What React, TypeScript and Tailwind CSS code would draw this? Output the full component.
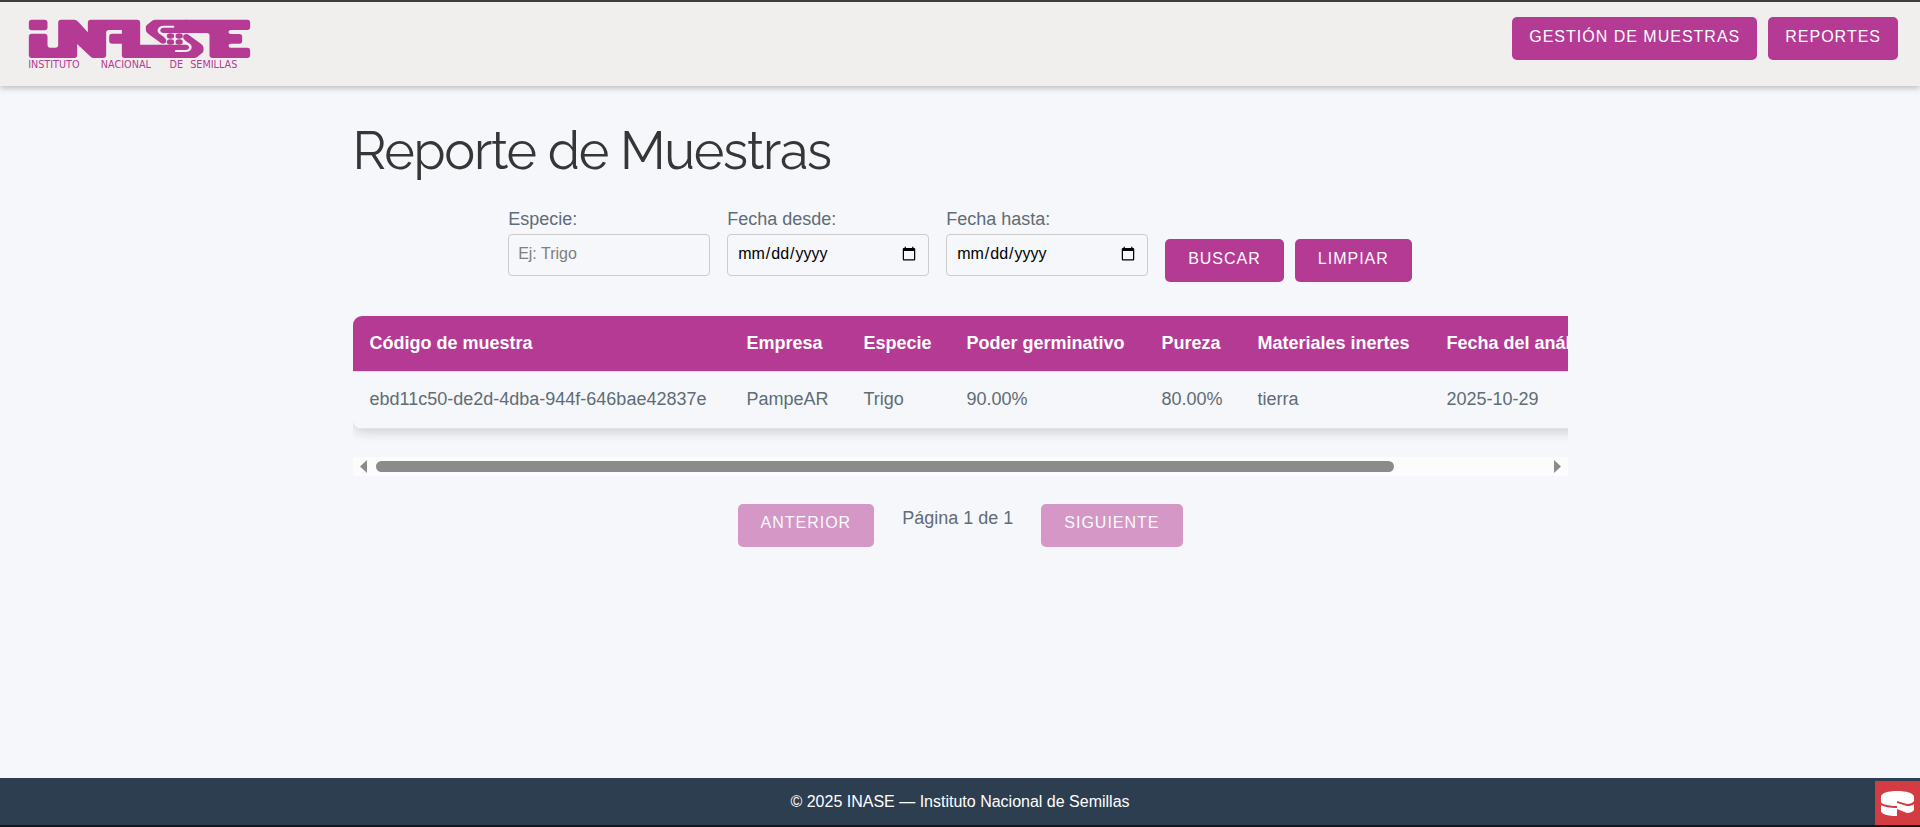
import { useRef } from 'react'

const button =
  'inline-flex h-[43px] cursor-pointer items-center justify-center rounded-[5px] bg-[#b43a94] pb-1 text-[16px] font-normal tracking-[1px] text-white uppercase'

const field =
  'h-[42px] w-[202px] rounded-[4px] border border-[#cccccc] bg-transparent px-[9px] pb-[3px] text-[16px] text-black placeholder:text-[#7f7f7f]'

const columns = [
  { label: 'Código de muestra', value: 'ebd11c50-de2d-4dba-944f-646bae42837e', width: 'min-w-[377px]' },
  { label: 'Empresa', value: 'PampeAR', width: 'min-w-[117px]' },
  { label: 'Especie', value: 'Trigo', width: 'min-w-[103px]' },
  { label: 'Poder germinativo', value: '90.00%', width: 'min-w-[195px]' },
  { label: 'Pureza', value: '80.00%', width: 'min-w-[96px]' },
  { label: 'Materiales inertes', value: 'tierra', width: 'min-w-[189px]' },
  { label: 'Fecha del análisis', value: '2025-10-29', width: 'min-w-[320px]' },
]

const hand =
  'M465 60H560V100H488Q480 98 480 92Q480 86 488 84H522V78H492C470 78 466 98 482 105Q490 109 496 117Q501 125 495 130Q489 135 481 129L444 102Q437 97 437 91V82Q437 78 441 75L456 63Q460 60 465 60Z'

function Logo() {
  return (
    <svg viewBox="84 58 668 150" className="h-[50px] w-[223px]" role="img" aria-label="INASE">
      <g fill="#b43a94">
        <rect x="86" y="60" width="56" height="32" rx="9" />
        <path d="M95 102H133Q142 102 142 111V137Q142 144 149 144H167Q174 144 174 137V69Q174 60 183 60H222Q229 60 234 66L263 98V69Q263 60 272 60H411Q420 60 420 69V135H490V175H374Q365 175 365 166V132H336Q327 132 327 123V111Q327 102 336 102H365V91H326Q318 91 318 99V166Q318 175 309 175H280Q274 175 269 169L231 133V166Q231 175 222 175H95Q86 175 86 166V111Q86 102 95 102Z" />
        <path d={hand} />
        <path d={hand} transform="rotate(180 523.5 117.5)" />
        <path d="M555 60H741Q750 60 750 69V82Q750 91 741 91H692Q685 91 685 97Q685 103 692 103H718Q726 103 726 111V124Q726 132 718 132H692Q685 132 685 138Q685 144 692 144H741Q750 144 750 153V166Q750 175 741 175H637Q628 175 628 166V108Q628 100 620 100H555Z" />
        <ellipse cx="511" cy="109" rx="11" ry="8" />
        <ellipse cx="537" cy="109" rx="11" ry="8" />
        <ellipse cx="511" cy="127" rx="11" ry="8" />
        <ellipse cx="537" cy="127" rx="11" ry="8" />
      </g>
      <g fill="#b43a94" fontSize="29" fontFamily="'DejaVu Sans', sans-serif">
        <text x="84" y="206">INSTITUTO</text>
        <text x="302" y="206">NACIONAL</text>
        <text x="508" y="206">DE</text>
        <text x="570" y="206">SEMILLAS</text>
      </g>
    </svg>
  )
}

function Header() {
  return (
    <header className="flex items-start justify-between border-t-2 border-[#403d3b] bg-[#f1efed] pr-[22px] pb-[17px] pl-7 shadow-[0_2px_6px_rgba(0,0,0,0.25)]">
      <a href="#inicio" className="mt-[17px]">
        <Logo />
      </a>
      <nav className="mt-[15px] flex gap-[11px]">
        <a href="#muestras" className={`${button} px-[17px]`}>Gestión de muestras</a>
        <a href="#reportes" className={`${button} px-[17px]`}>Reportes</a>
      </nav>
    </header>
  )
}

function Filters() {
  return (
    <form className="flex items-start justify-center gap-[17px]" onSubmit={(e) => e.preventDefault()}>
      <div className="flex flex-col">
        <label htmlFor="especie" className="leading-[30px]">Especie:</label>
        <input id="especie" type="text" placeholder="Ej: Trigo" className={field} />
      </div>
      <div className="flex flex-col">
        <label htmlFor="desde" className="leading-[30px]">Fecha desde:</label>
        <input id="desde" type="date" className={field} />
      </div>
      <div className="flex flex-col">
        <label htmlFor="hasta" className="leading-[30px]">Fecha hasta:</label>
        <input id="hasta" type="date" className={field} />
      </div>
      <div className="mt-[35px] flex gap-[11px]">
        <button type="submit" className={`${button} px-[23px]`}>Buscar</button>
        <button type="reset" className={`${button} px-[23px]`}>Limpiar</button>
      </div>
    </form>
  )
}

function SamplesTable() {
  const viewport = useRef<HTMLDivElement>(null)
  const scroll = (left: number) => viewport.current?.scrollBy({ left, behavior: 'smooth' })

  return (
    <section className="mt-[34px]">
      <div ref={viewport} className="overflow-hidden pb-7">
        <table className="min-w-full overflow-hidden rounded-[9px] text-left whitespace-nowrap shadow-[0_4px_11px_rgba(0,0,0,0.14)]">
          <thead className="bg-[#b43a94] text-white">
            <tr className="border-b border-[#e1e1e1]">
              {columns.map((c) => (
                <th key={c.label} className="h-[55px] p-0 font-bold">
                  <div className={`${c.width} pl-[17px]`}>{c.label}</div>
                </th>
              ))}
            </tr>
          </thead>
          <tbody>
            <tr className="border-b border-[#e1e1e1]">
              {columns.map((c) => (
                <td key={c.label} className="h-[57px] p-0">
                  <div className="pl-[17px]">{c.value}</div>
                </td>
              ))}
            </tr>
          </tbody>
        </table>
      </div>
      <div className="flex h-[19px] items-center bg-[#fcfcfc] px-[7px]">
        <button type="button" aria-label="Desplazar a la izquierda" onClick={() => scroll(-200)}>
          <svg viewBox="0 0 7 13" className="block h-[13px] w-[7px]"><path d="M7 0V13L0 6.5Z" fill="#8b8b8b" /></svg>
        </button>
        <div className="mr-[7px] ml-[9px] flex-1">
          <div className="h-[11px] w-[87%] rounded-[6px] bg-[#8b8b8b]" />
        </div>
        <button type="button" aria-label="Desplazar a la derecha" onClick={() => scroll(200)}>
          <svg viewBox="0 0 7 13" className="block h-[13px] w-[7px]"><path d="M0 0V13L7 6.5Z" fill="#8b8b8b" /></svg>
        </button>
      </div>
    </section>
  )
}

function Pagination() {
  return (
    <div className="mt-7 flex items-start justify-center gap-7">
      <button type="button" disabled className={`${button} px-[23px] opacity-50`}>Anterior</button>
      <span className="leading-[29px]">Página 1 de 1</span>
      <button type="button" disabled className={`${button} px-[23px] opacity-50`}>Siguiente</button>
    </div>
  )
}

function Footer() {
  return (
    <footer className="flex items-stretch border-b-2 border-[#17171b] bg-[#2d3e50] text-white">
      <p className="flex h-[47px] flex-1 items-center justify-center pl-[45px] text-[16px]">
        © 2025 INASE — Instituto Nacional de Semillas
      </p>
      <button type="button" aria-label="DebugKit" className="mt-[3px] flex w-[45px] items-center justify-center bg-[#d33c43]">
        <svg viewBox="0 0 33 25" className="h-[25px] w-[33px]" fill="#fff">
          <path d="M0 6C0 2 7 0 16 0S33 2 33 6V10Q31 13 26 13L16 10V15C8 15 0 13 0 11Z" />
          <path d="M0 14C3 16 9 17 16 17V25C7 25 0 23 0 20Z" />
          <path d="M16 12L26 15Q31 15 33 13V19Q31 22 26 22L16 18Z" />
        </svg>
      </button>
    </footer>
  )
}

export default function App() {
  return (
    <div className="flex min-h-screen flex-col bg-[#f5f7fa] font-['Liberation_Sans',Arial,sans-serif] text-[18px] text-[#606c76]">
      <Header />
      <main className="mx-auto w-full max-w-[1215px] flex-1 pt-[34px]">
        <h1 className="mb-[22px] font-['Raleway','Lato',sans-serif] text-[52px] leading-[62px] font-normal tracking-tight text-[#363637]">
          Reporte de Muestras
        </h1>
        <Filters />
        <SamplesTable />
        <Pagination />
      </main>
      <Footer />
    </div>
  )
}
